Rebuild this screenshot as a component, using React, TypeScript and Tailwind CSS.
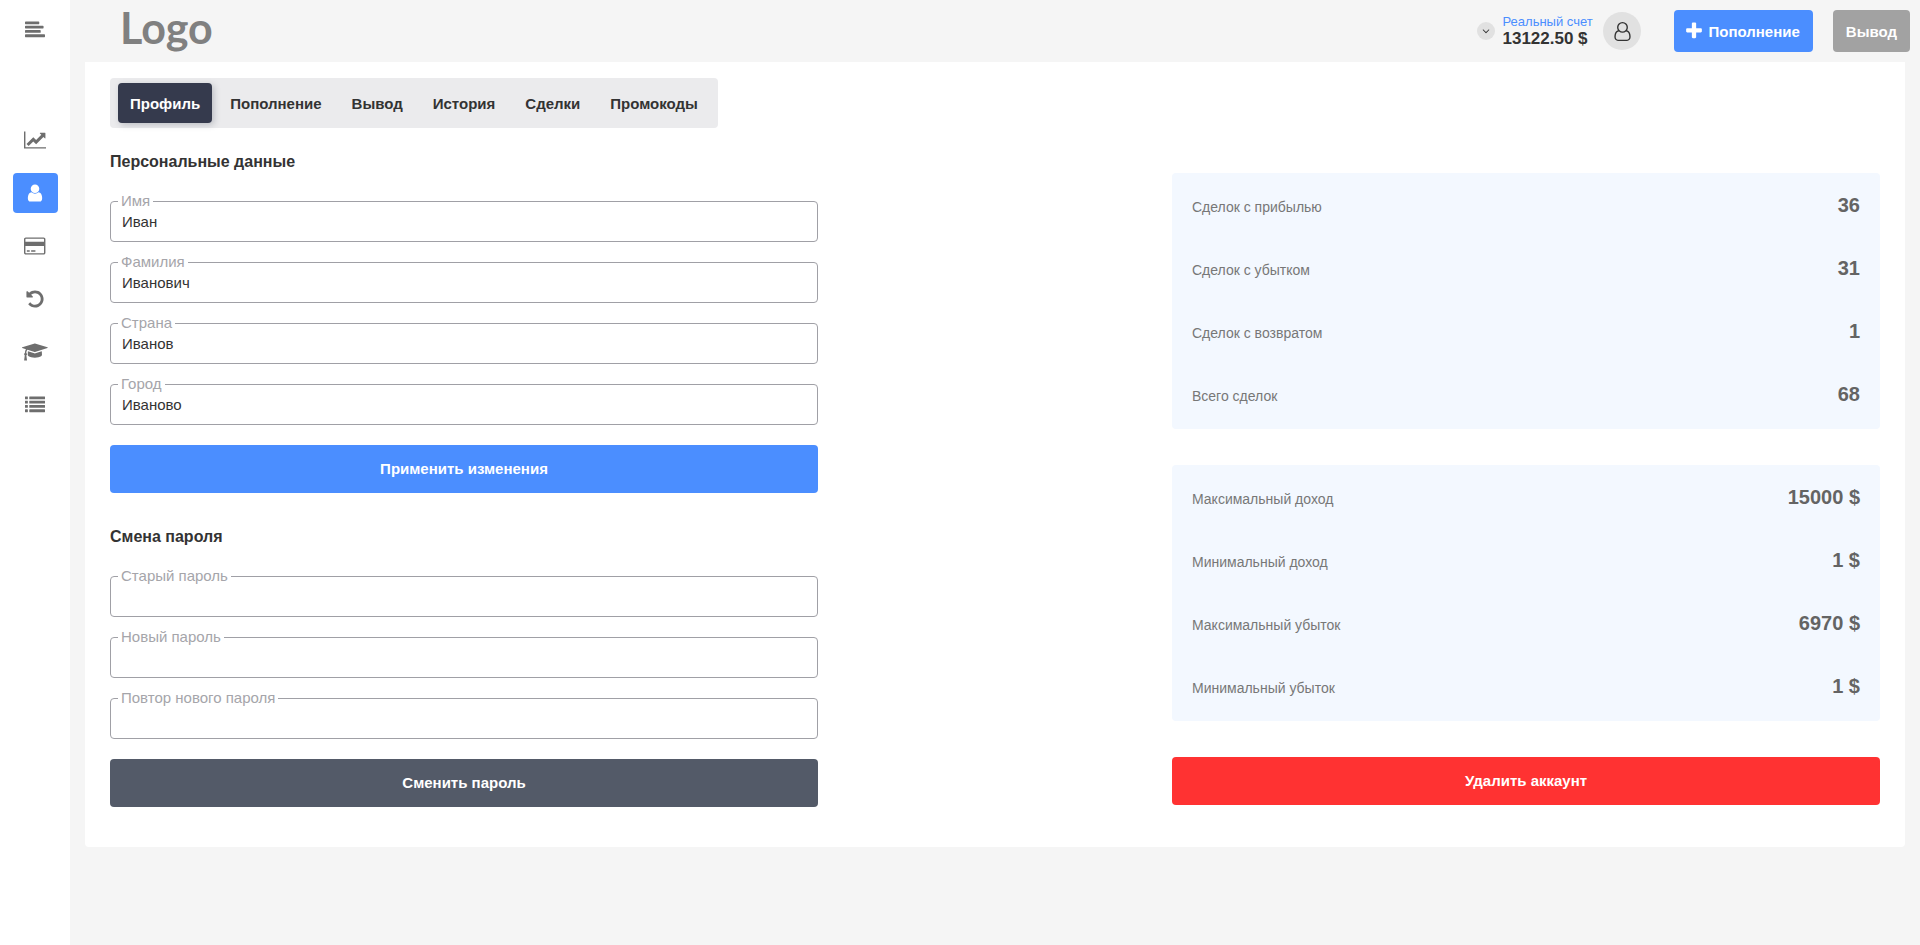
import { useState } from 'react';

const ICONS = {
  menu: 'M1792 1344v128q0 26-19 45t-45 19h-1664q-26 0-45-19t-19-45v-128q0-26 19-45t45-19h1664q26 0 45 19t19 45zm-384-384v128q0 26-19 45t-45 19h-1280q-26 0-45-19t-19-45v-128q0-26 19-45t45-19h1280q26 0 45 19t19 45zm256-384v128q0 26-19 45t-45 19h-1536q-26 0-45-19t-19-45v-128q0-26 19-45t45-19h1536q26 0 45 19t19 45zm-384-384v128q0 26-19 45t-45 19h-1152q-26 0-45-19t-19-45v-128q0-26 19-45t45-19h1152q26 0 45 19t19 45z',
  chart: 'M2048 1536v128h-2048v-1536h128v1408h1920zm-128-1248v435q0 21-19.5 29.5t-35.5-7.5l-121-121-633 633q-10 10-23 10t-23-10l-233-233-416 416-192-192 585-585q10-10 23-10t23 10l233 233 464-464-121-121q-16-16-7.5-35.5t29.5-19.5h435q14 0 23 9t9 23z',
  user: 'M1536 1399q0 109-62.5 187t-150.5 78h-854q-88 0-150.5-78t-62.5-187q0-85 8.5-160.5t31.5-152 58.5-131 94-89 134.5-34.5q131 128 313 128t313-128q76 0 134.5 34.5t94 89 58.5 131 31.5 152 8.5 160.5zm-256-887q0 159-112.5 271.5t-271.5 112.5-271.5-112.5-112.5-271.5 112.5-271.5 271.5-112.5 271.5 112.5 112.5 271.5z',
  card: 'M1760 128q66 0 113 47t47 113v1216q0 66-47 113t-113 47h-1600q-66 0-113-47t-47-113v-1216q0-66 47-113t113-47h1600zm-1600 128q-13 0-22.5 9.5t-9.5 22.5v224h1664v-224q0-13-9.5-22.5t-22.5-9.5h-1600zm1600 1280q13 0 22.5-9.5t9.5-22.5v-608h-1664v608q0 13 9.5 22.5t22.5 9.5h1600zm-1504-128v-128h256v128h-256zm384 0v-128h384v128h-384z',
  undo: 'M1664 896q0 156-61 298t-164 245-245 164-298 61q-172 0-327-72.5t-264-204.5q-7-10-6.5-22.5t8.5-20.5l137-138q10-9 25-9 16 2 23 12 73 95 179 147t225 52q104 0 198.5-40.5t163.5-109.5 109.5-163.5 40.5-198.5-40.5-198.5-109.5-163.5-163.5-109.5-198.5-40.5q-98 0-188 35.5t-160 101.5l137 138q31 30 14 69-17 40-59 40h-448q-26 0-45-19t-19-45v-448q0-42 40-59 39-17 69 14l130 129q107-101 244.5-156.5t284.5-55.5q156 0 298 61t245 164 164 245 61 298z',
  cap: 'M1774 836l18 316q4 69-82 128t-235 93.5-323 34.5-323-34.5-235-93.5-82-128l18-316 574 181q22 7 48 7t48-7zm530-324q0 23-22 31l-1120 352q-4 1-10 1t-10-1l-652-206q-43 34-71 111.5t-34 178.5q63 36 63 109 0 69-58 107l58 433q2 14-8 25-9 11-24 11h-192q-15 0-24-11-10-11-8-25l58-433q-58-38-58-107 0-73 65-111 11-207 98-330l-333-104q-22-8-22-31t22-31l1120-352q4-1 10-1t10 1l1120 352q22 8 22 31z',
  list: 'M32 1280h192q32 0 32 32v192q0 32-32 32h-192q-32 0-32-32v-192q0-32 32-32zM32 896h192q32 0 32 32v192q0 32-32 32h-192q-32 0-32-32v-192q0-32 32-32zM32 512h192q32 0 32 32v192q0 32-32 32h-192q-32 0-32-32v-192q0-32 32-32zM32 128h192q32 0 32 32v192q0 32-32 32h-192q-32 0-32-32v-192q0-32 32-32zM416 1280h1344q32 0 32 32v192q0 32-32 32h-1344q-32 0-32-32v-192q0-32 32-32zM416 896h1344q32 0 32 32v192q0 32-32 32h-1344q-32 0-32-32v-192q0-32 32-32zM416 512h1344q32 0 32 32v192q0 32-32 32h-1344q-32 0-32-32v-192q0-32 32-32zM416 128h1344q32 0 32 32v192q0 32-32 32h-1344q-32 0-32-32v-192q0-32 32-32z',
  plus: 'M1600 736v192q0 40-28 68t-68 28h-416v416q0 40-28 68t-68 28h-192q-40 0-68-28t-28-68v-416h-416q-40 0-68-28t-28-68v-192q0-40 28-68t68-28h416v-416q0-40 28-68t68-28h192q40 0 68 28t28 68v416h416q40 0 68 28t28 68z',
  userOutline: 'M1329 784q47 14 89.5 38t89 73 79.5 115.5 55 172 22 236.5q0 154-100 263.5t-241 109.5h-854q-141 0-241-109.5t-100-263.5q0-131 22-236.5t55-172 79.5-115.5 89-73 89.5-38q-79-125-79-272 0-104 40.5-198.5t109.5-163.5 163.5-109.5 198.5-40.5 198.5 40.5 163.5 109.5 109.5 163.5 40.5 198.5q0 147-79 272zm-433-656q-159 0-271.5 112.5t-112.5 271.5 112.5 271.5 271.5 112.5 271.5-112.5 112.5-271.5-112.5-271.5-271.5-112.5zm427 1536q88 0 150.5-71.5t62.5-173.5q0-239-78.5-377t-225.5-145q-145 127-336 127t-336-127q-147 7-225.5 145t-78.5 377q0 102 62.5 173.5t150.5 71.5h854z',
  down: 'M1395 736q0 13-10 23l-466 466q-10 10-23 10t-23-10l-466-466q-10-10-10-23t10-23l50-50q10-10 23-10t23 10l393 393 393-393q10-10 23-10t23 10l50 50q10 10 10 23z',
};

type IconName = keyof typeof ICONS;

function Icon({ name, width = 1792, className = 'h-5' }: { name: IconName; width?: number; className?: string }) {
  return (
    <svg viewBox={`0 0 ${width} 1792`} className={className} fill="currentColor" aria-hidden="true">
      <path d={ICONS[name]} />
    </svg>
  );
}

const navItems: { name: IconName; label: string; width?: number }[] = [
  { name: 'chart', label: 'Торговля', width: 2048 },
  { name: 'user', label: 'Профиль' },
  { name: 'card', label: 'Пополнение', width: 1920 },
  { name: 'undo', label: 'История' },
  { name: 'cap', label: 'Обучение', width: 2304 },
  { name: 'list', label: 'Сделки' },
];

const tabs = ['Профиль', 'Пополнение', 'Вывод', 'История', 'Сделки', 'Промокоды'];

const personalFields = [
  { id: 'name', label: 'Имя', value: 'Иван' },
  { id: 'surname', label: 'Фамилия', value: 'Иванович' },
  { id: 'country', label: 'Страна', value: 'Иванов' },
  { id: 'city', label: 'Город', value: 'Иваново' },
];

const passwordFields = [
  { id: 'old-password', label: 'Старый пароль' },
  { id: 'new-password', label: 'Новый пароль' },
  { id: 'repeat-password', label: 'Повтор нового пароля' },
];

const dealStats = [
  { label: 'Сделок с прибылью', value: '36' },
  { label: 'Сделок с убытком', value: '31' },
  { label: 'Сделок с возвратом', value: '1' },
  { label: 'Всего сделок', value: '68' },
];

const moneyStats = [
  { label: 'Максимальный доход', value: '15000 $' },
  { label: 'Минимальный доход', value: '1 $' },
  { label: 'Максимальный убыток', value: '6970 $' },
  { label: 'Минимальный убыток', value: '1 $' },
];

function Field({ id, label, value = '', type = 'text' }: { id: string; label: string; value?: string; type?: string }) {
  return (
    <div className="relative">
      <label htmlFor={id} className="absolute -top-2.5 left-2 bg-white px-[3px] leading-5 text-[#a5a5aa]">
        {label}
      </label>
      <input
        id={id}
        type={type}
        defaultValue={value}
        className="block h-[41px] w-full rounded border border-[#a0a0a6] px-[11px] outline-none focus:border-[#4b8eff]"
      />
    </div>
  );
}

function StatsPanel({ items }: { items: { label: string; value: string }[] }) {
  return (
    <dl className="flex flex-col gap-10 rounded bg-[#f3f8ff] px-5 pt-5 pb-6">
      {items.map((item) => (
        <div key={item.label} className="flex h-[23px] items-baseline justify-between">
          <dt className="text-sm text-[#777777]">{item.label}</dt>
          <dd className="text-xl leading-6 font-bold text-[#646464]">{item.value}</dd>
        </div>
      ))}
    </dl>
  );
}

export default function App() {
  const [activeTab, setActiveTab] = useState('Профиль');

  return (
    <div className="flex min-h-screen bg-[#f5f5f5] font-['Liberation_Sans',Arial,sans-serif] text-[15px] text-[#333333]">
      <aside className="flex w-[70px] shrink-0 flex-col items-center bg-white text-[#6e6e6e]">
        <button type="button" aria-label="Меню" className="flex h-[60px] items-center">
          <Icon name="menu" />
        </button>
        <nav className="mt-[60px] flex flex-col gap-[13px]">
          {navItems.map((item) => (
            <a
              key={item.name}
              href="#"
              aria-label={item.label}
              className={`flex h-10 w-[45px] items-center justify-center rounded ${item.name === 'user' ? 'bg-[#4b8eff] text-white' : ''}`}
            >
              <Icon name={item.name} width={item.width} />
            </a>
          ))}
        </nav>
      </aside>

      <div className="min-w-0 flex-1">
        <header className="flex h-[62px] items-center justify-between pr-2.5 pl-[50px]">
          <a href="#" className="pb-1.5 font-['Lato',sans-serif] text-[43px] leading-[50px] font-bold text-[#808080]">Logo</a>
          <div className="flex items-center">
            <button type="button" aria-label="Выбрать счет" className="mr-[7px] flex size-[18px] items-center justify-center rounded-full bg-[#e1e1e1]">
              <Icon name="down" className="h-3" />
            </button>
            <div className="mr-2.5 w-[91px] whitespace-nowrap">
              <div className="text-[13px] leading-4 text-[#4b8eff]">Реальный счет</div>
              <div className="text-[17px] leading-[18px] font-bold">13122.50 $</div>
            </div>
            <button type="button" aria-label="Аккаунт" className="mr-[33px] flex size-[38px] items-center justify-center rounded-full bg-[#e1e1e1]">
              <Icon name="userOutline" className="h-[19px]" />
            </button>
            <button type="button" className="mr-5 flex h-[42px] items-center gap-1 rounded bg-[#4b8eff] pr-[13px] pl-2.5 font-bold text-white">
              <Icon name="plus" />
              <span className="pt-0.5">Пополнение</span>
            </button>
            <button type="button" className="h-[42px] rounded bg-[#a2a2a2] px-[13px] pt-0.5 font-bold text-white">Вывод</button>
          </div>
        </header>

        <main className="mx-[15px] rounded-b bg-white px-[25px] pt-4 pb-10">
          <div className="flex h-[50px] w-fit items-center gap-1.5 rounded bg-[#ebebed] px-2">
            {tabs.map((tab) => (
              <button
                key={tab}
                type="button"
                onClick={() => setActiveTab(tab)}
                className={`h-10 rounded px-3 pt-0.5 font-bold ${activeTab === tab ? 'bg-[#353a4d] text-white shadow-[2px_2px_6px_rgba(53,58,77,0.25)]' : ''}`}
              >
                {tab}
              </button>
            ))}
          </div>

          <div className="flex items-start justify-between pt-[22px]">
            <div className="w-2/5">
              <form className="flex flex-col gap-5">
                <h2 className="mb-[7px] text-base leading-6 font-bold">Персональные данные</h2>
                {personalFields.map((field) => (
                  <Field key={field.id} {...field} />
                ))}
                <button type="button" className="h-12 rounded bg-[#4b8eff] font-bold text-white">Применить изменения</button>
              </form>
              <form className="mt-8 flex flex-col gap-5">
                <h2 className="mb-[7px] text-base leading-6 font-bold">Смена пароля</h2>
                {passwordFields.map((field) => (
                  <Field key={field.id} type="password" {...field} />
                ))}
                <button type="button" className="h-12 rounded bg-[#535a68] font-bold text-white">Сменить пароль</button>
              </form>
            </div>

            <div className="flex w-2/5 flex-col gap-9 pt-[23px]">
              <StatsPanel items={dealStats} />
              <StatsPanel items={moneyStats} />
              <button type="button" className="h-12 rounded bg-[#ff3232] font-bold text-white">Удалить аккаунт</button>
            </div>
          </div>
        </main>
      </div>
    </div>
  );
}
